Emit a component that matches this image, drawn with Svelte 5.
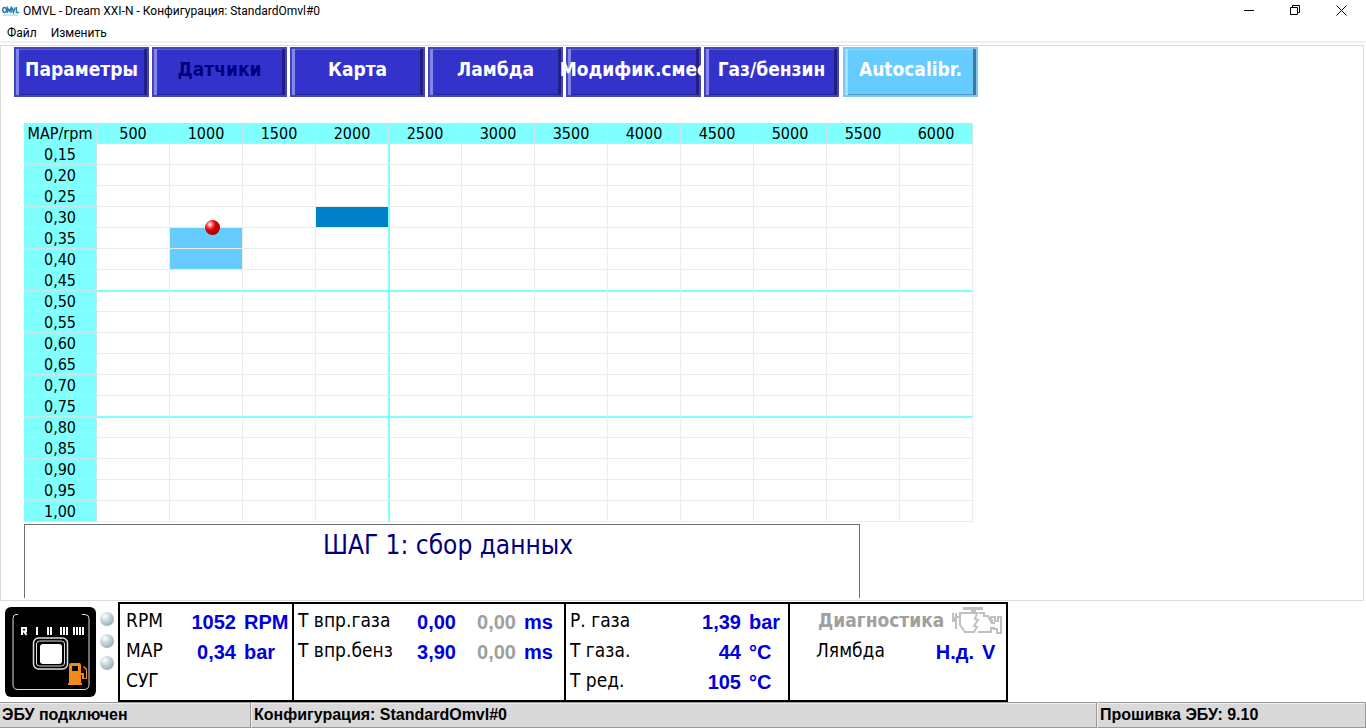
<script lang="ts">
    const tabs = [
        { label: 'Параметры', kind: '' },
        { label: 'Датчики', kind: 'dim' },
        { label: 'Карта', kind: '' },
        { label: 'Ламбда', kind: '' },
        { label: 'Модифик.смес', kind: '' },
        { label: 'Газ/бензин', kind: '' },
        { label: 'Autocalibr.', kind: 'active' },
    ]

    const rpm = [500, 1000, 1500, 2000, 2500, 3000, 3500, 4000, 4500, 5000, 5500, 6000]
    const map = Array.from({ length: 18 }, (_, i) => (0.15 + i * 0.05).toFixed(2).replace('.', ','))

    // collected points, key is "map/rpm"
    const filled: Record<string, string> = {
        '0,30/2000': 'done',
        '0,35/1000': 'pending',
        '0,40/1000': 'pending',
    }
    const cursor = '0,35/1000'

    // zone limits, drawn with the thick lines
    const zoneRpm = 2000
    const zoneMap = ['0,45', '0,75']
</script>

<div class="window">
    <header class="titlebar">
        <svg class="logo" width="17" height="10" viewBox="0 0 17 10" aria-hidden="true">
            <g fill="none" stroke="#2a7fae" stroke-width="1.5">
                <ellipse cx="2.6" cy="4" rx="1.8" ry="2.4" />
                <path d="M5.5 7V2l1.8 3L9 2v5M10 1.5l1.4 5 1.6-5M14.4 1v5.6H17" />
            </g>
            <path d="M1 9h15" stroke="#9cc8de" />
        </svg>
        <h1>OMVL - Dream XXI-N - Конфигурация: StandardOmvl#0</h1>
        <button class="win" aria-label="Свернуть">
            <svg width="11" height="11" viewBox="0 0 11 11"><path d="M0 5.5h10" /></svg>
        </button>
        <button class="win" aria-label="Восстановить">
            <svg width="11" height="11" viewBox="0 0 11 11"><path d="M.5 2.500h7v7h-7zM2.500 2.500v-2h7v7h-2" /></svg>
        </button>
        <button class="win" aria-label="Закрыть">
            <svg width="11" height="11" viewBox="0 0 11 11"><path d="M.5.5l10 10M10.5.5l-10 10" /></svg>
        </button>
    </header>

    <nav class="menu">
        <button>Файл</button>
        <button>Изменить</button>
    </nav>

    <main class="work">
        <div class="tabs">
            {#each tabs as tab}
                <button class={'tab ' + tab.kind}><span>{tab.label}</span></button>
            {/each}
        </div>

        <table>
            <thead>
                <tr>
                    <th>MAP/rpm</th>
                    {#each rpm as r}
                        <th scope="col">{r}</th>
                    {/each}
                </tr>
            </thead>
            <tbody>
                {#each map as m}
                    <tr class:zone={zoneMap.includes(m)}>
                        <th scope="row">{m}</th>
                        {#each rpm as r}
                            <td class={filled[m + '/' + r] ?? ''} class:limit={r === zoneRpm}>
                                {#if cursor === m + '/' + r}
                                    <i class="ball"></i>
                                {/if}
                            </td>
                        {/each}
                    </tr>
                {/each}
            </tbody>
        </table>

        <div class="message">ШАГ 1: сбор данных</div>
    </main>

    <section class="gauges">
        <button class="switch" aria-label="Переключатель газ/бензин">
            <svg width="91" height="90" viewBox="0 0 91 90">
                <rect width="91" height="90" rx="6" fill="#000" />
                <g fill="none" stroke="#ddd">
                    <path d="M13 7.5h-2q-3 0-3 4v66q0 5 5 5h66q5 0 5-5v-66q0-4-4-4h-3" />
                    <rect x="28.500" y="31" width="34" height="31" rx="5" stroke-width="1.500" />
                    <rect x="31.500" y="34" width="28" height="25" rx="3" />
                </g>
                <rect x="35" y="37" width="22" height="20" rx="3" fill="#fff" />
                <g fill="none" stroke="#fff" stroke-width="2">
                    <path d="M17 28v-7h4v3.500h-4M19 24.500l2.500 3.500" />
                    <path d="M32 20v8M43 20v8M46 20v8" />
                    <path d="M56 20v8M59 20v8M62 20v8" />
                    <path d="M69 20v8M72 20v8M75 20v8M78 20v8" />
                </g>
                <g fill="#f28a1c">
                    <path fill-rule="evenodd" d="M64 58q0-2 2-2h8q2 0 2 2v18h1v2H63v-2h1zM67 59v5h6v-5z" />
                    <path d="M76 66h3v5h2v-8l-3-3 1-1 3 3v10h-5v-4h-1z" />
                </g>
            </svg>
        </button>
        <div class="leds"><i></i><i></i><i></i></div>

        <div class="readings">
            <div class="group engine">
                <span>RPM</span><b>1052</b><b class="unit">RPM</b>
                <span>MAP</span><b>0,34</b><b class="unit">bar</b>
                <span>СУГ</span>
            </div>
            <div class="group inject">
                <span>Т впр.газа</span><b>0,00</b><b class="off">0,00</b><b class="unit">ms</b>
                <span>Т впр.бенз</span><b>3,90</b><b class="off">0,00</b><b class="unit">ms</b>
            </div>
            <div class="group gas">
                <span>Р. газа</span><b>1,39</b><b class="unit">bar</b>
                <span>Т газа.</span><b>44</b><b class="unit">°C</b>
                <span>Т ред.</span><b>105</b><b class="unit">°C</b>
            </div>
            <div class="group diag">
                <button class="diagnostics">
                    Диагностика
                    <svg width="51" height="28" viewBox="0 0 51 28" aria-hidden="true">
                        <g fill="#c0c0c0">
                            <path d="M11 0h20v3h-7v3h-5V3h-8z" />
                            <path d="M0 6h2v4h1V6h2v16H3v-7H0z" />
                        </g>
                        <g fill="none" stroke="#c0c0c0" stroke-width="2">
                            <path d="M4 10h4V6h17l-2 6 3 1-4 6 3 1-3 5h-9l-5-7V10" />
                            <path d="M27 6h5v3h4l2 4h2v3h3M39 16v-6h4v4h3v-4h3v16h-4v-4h-3v-1h-3v4H26" />
                        </g>
                    </svg>
                </button>
                <span>Лямбда</span><b>Н.д.</b><b class="unit">V</b>
            </div>
        </div>
    </section>

    <footer class="status">
        <div>ЭБУ подключен</div>
        <div>Конфигурация: StandardOmvl#0</div>
        <div>Прошивка ЭБУ: 9.10</div>
    </footer>
</div>

<style>
    :global(body) {
        background: #fff;
    }
    .window {
        display: flex;
        flex-direction: column;
        min-height: 100vh;
        color: #000;
        font-family: "DejaVu Sans Condensed", "Noto Sans", sans-serif;
    }
    button {
        padding: 0;
        border: 0;
        background: none;
        color: inherit;
        font: inherit;
    }

    .titlebar {
        display: flex;
        align-items: center;
        height: 22px;
        padding: 0 2px;
    }
    .titlebar h1 {
        flex: 1;
        margin: 0 0 0 4px;
        font: 12px/22px Roboto, sans-serif;
    }
    .win {
        width: 46px;
        height: 22px;
    }
    .win svg {
        display: block;
        margin: 0 auto 2px;
        fill: none;
        stroke: #000;
    }
    .menu {
        display: flex;
        gap: 14px;
        height: 19px;
        padding-left: 7px;
        border-bottom: 2px solid #f0f0f0;
        font: 12px/22px Roboto, sans-serif;
    }

    .work {
        flex: 1;
        display: flex;
        flex-direction: column;
        margin: 2px 2px 0 0;
        padding: 1px 13px 2px;
        border: 1px solid #dcdcdc;
    }
    .tabs {
        display: flex;
        gap: 3px;
    }
    .tab {
        display: flex;
        justify-content: center;
        width: 135px;
        height: 50px;
        background: #3333cc;
        box-shadow:
            inset 0 0 0 2px #4444b4,
            inset 5px 0 #8484ee,
            inset -5px 0 #1f1f85,
            inset 0 3px #5a5ae0,
            inset 0 -3px #26269a;
        color: #fff;
        font-size: 19px;
        font-weight: bold;
        line-height: 45px;
        white-space: nowrap;
    }
    .tab.dim {
        color: #000080;
    }
    .tab.active {
        margin-left: 1px;
        background: #66ccff;
        box-shadow:
            inset 0 0 0 2px #7cc8f0,
            inset 5px 0 #a3e0ff,
            inset -5px 0 #3d7a99,
            inset 0 3px #8ad8ff,
            inset 0 -3px #4a9ac4;
    }

    table {
        width: 949px;
        margin: 26px 0 0 10px;
        border-spacing: 0;
        table-layout: fixed;
        font-size: 16px;
    }
    th,
    td {
        position: relative;
        height: 20px;
        padding: 0;
        border: solid #ececec;
        border-width: 0 1px 1px 0;
    }
    th {
        box-sizing: border-box;
        height: 21px;
        padding-top: 1px;
        background: #80ffff;
        border-color: #c8e8e8;
        font-weight: normal;
        line-height: 19px;
    }
    td.done {
        background: #0080c8;
    }
    td.pending {
        background: #66ccff;
    }
    td.limit {
        border-right-color: #80ffff;
    }
    td.limit + td {
        box-shadow: inset 1px 0 #80ffff;
    }
    .zone td {
        border-bottom-color: #80ffff;
    }
    .zone + tr td {
        box-shadow: inset 0 1px #80ffff;
    }
    .zone + tr td.limit + td {
        box-shadow: inset 1px 1px #80ffff;
    }
    .ball {
        position: absolute;
        top: -8px;
        left: 35px;
        z-index: 1;
        width: 15px;
        height: 15px;
        border-radius: 50%;
        background: radial-gradient(circle at 33% 30%, #fff 0, #ff6a6a 18%, #e00000 38%, #a00000 75%, #600000 100%);
    }
    .message {
        flex: 1;
        width: 822px;
        margin: 2px 0 0 10px;
        padding-left: 12px;
        border: 1px solid #707070;
        border-bottom: 0;
        color: #000080;
        font-size: 26px;
        line-height: 40px;
        text-align: center;
    }

    .gauges {
        display: flex;
        padding: 1px 0 0 5px;
    }
    .switch {
        margin-top: 5px;
        height: 90px;
    }
    .switch svg {
        display: block;
    }
    .leds {
        display: flex;
        flex-direction: column;
        gap: 8px;
        padding: 10px 4px 0;
    }
    .leds i {
        width: 14px;
        height: 14px;
        border-radius: 50%;
        background: radial-gradient(circle at 35% 30%, #fff 0, #c8d8de 35%, #9ab0b8 75%, #8098a0 100%);
    }
    .readings {
        display: flex;
        border: 2px solid #000;
    }
    .group {
        display: grid;
        grid-auto-rows: 30px;
        height: 96px;
        box-sizing: border-box;
        padding: 1px 0 0 4px;
        font-size: 19px;
        line-height: 30px;
        white-space: nowrap;
    }
    .group + .group {
        border-left: 2px solid #000;
    }
    .group b {
        color: #0000dd;
        font: bold 20px/34px "Liberation Sans", sans-serif;
        text-align: right;
    }
    .group b.unit {
        padding-left: 8px;
        text-align: left;
    }
    .group b.off {
        color: #a0a0a0;
    }
    .engine {
        grid-template-columns: 50px 60px 56px;
        padding-left: 6px;
    }
    .inject {
        grid-template-columns: 100px 58px 60px 48px;
    }
    .gas {
        grid-template-columns: 110px 61px 47px;
    }
    .diag {
        grid-template-columns: 90px 68px 32px;
        padding-left: 26px;
    }
    .diagnostics {
        grid-column: 1 / -1;
        display: flex;
        gap: 8px;
        padding-left: 2px;
        color: #a0a0a0;
        font-weight: bold;
    }
    .diagnostics svg {
        flex: none;
        margin-top: 2px;
    }

    .status {
        display: grid;
        grid-template-columns: 251px 1fr 269px;
        background: #d9d9d9;
    }
    .status div {
        padding-left: 2px;
        border: 1px solid #9a9a9a;
        border-left-width: 0;
        box-shadow: inset 0 1px #eee;
        font: bold 16px/24px "Liberation Sans", sans-serif;
    }
    .status div + div {
        border-left: 1px solid #eee;
    }
</style>
